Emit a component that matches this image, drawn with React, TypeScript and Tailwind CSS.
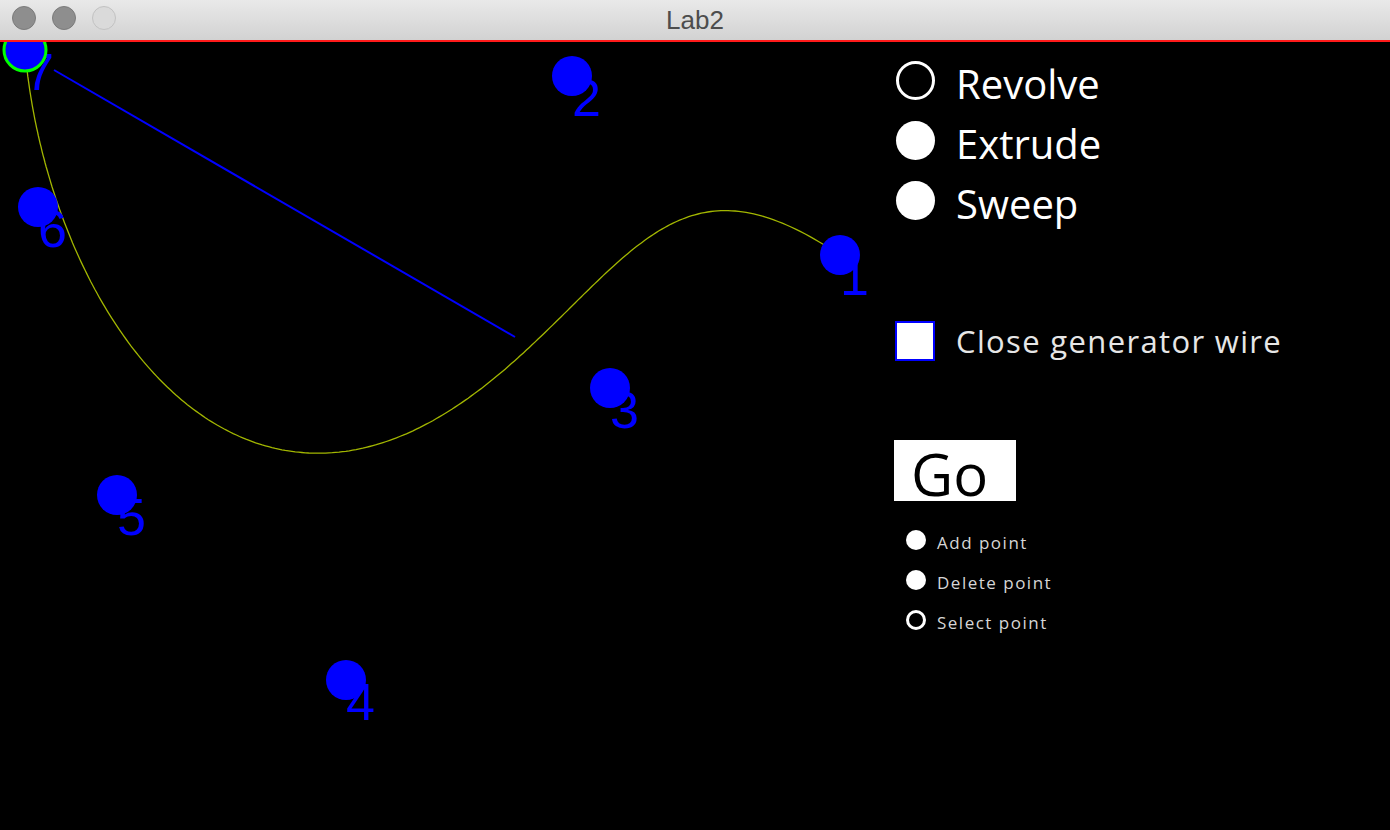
import { FC } from 'react';

// control points of the generator wire, in canvas coordinates
const points: [number, number][] = [
  [840, 213],
  [572, 34],
  [610, 346],
  [346, 638],
  [117, 453],
  [38, 165],
  [25, 8],
];

// de Casteljau evaluation of the bezier through all the points
const bezier = (pts: [number, number][], t: number): [number, number] => {
  let p = pts.map((q) => [q[0], q[1]] as [number, number]);
  while (p.length > 1) {
    const next: [number, number][] = [];
    for (let i = 0; i < p.length - 1; i++) {
      next.push([p[i][0] + (p[i + 1][0] - p[i][0]) * t, p[i][1] + (p[i + 1][1] - p[i][1]) * t]);
    }
    p = next;
  }
  return p[0];
};

const curve = Array.from({ length: 301 }, (_, i) => bezier(points, i / 300))
  .map(([x, y]) => `${x.toFixed(1)},${y.toFixed(1)}`)
  .join(' ');

const TitleBar: FC = () => (
  <div className="relative h-[40px] bg-gradient-to-b from-[#e9e9e9] to-[#d2d2d2] flex items-center justify-center">
    <div className="absolute left-[12px] top-[6px] flex gap-[16px]">
      <div className="w-[24px] h-[24px] rounded-full bg-[#8e8e8e] border border-[#7b7b7b]" />
      <div className="w-[24px] h-[24px] rounded-full bg-[#8e8e8e] border border-[#7b7b7b]" />
      <div className="w-[24px] h-[24px] rounded-full bg-[#dadada] border border-[#c2c2c2]" />
    </div>
    <span className="text-[26px] leading-none text-[#4d4d4d]" style={{ fontFamily: '"Liberation Sans", Arial, sans-serif' }}>
      Lab2
    </span>
  </div>
);

const Canvas: FC = () => (
  <svg width={880} height={788} viewBox="0 0 880 788" className="block shrink-0">
    <polyline points={curve} fill="none" stroke="#a2b600" strokeWidth={1.3} />
    <line x1={54} y1={28} x2={515} y2={295} stroke="#0000ff" strokeWidth={2} />
    {points.map(([x, y], i) => (
      <text
        key={`t${i}`}
        x={x}
        y={y + 40}
        fill="#0000ff"
        fontSize={52}
        style={{ fontFamily: '"Liberation Sans", Arial, sans-serif' }}
      >
        {i + 1}
      </text>
    ))}
    {points.map(([x, y], i) => (
      <circle key={`c${i}`} cx={x} cy={y} r={20} fill="#0000ff" />
    ))}
    <circle cx={25} cy={8} r={21} fill="none" stroke="#00ff00" strokeWidth={3} />
  </svg>
);

const modes = [
  { label: 'Revolve', on: false },
  { label: 'Extrude', on: true },
  { label: 'Sweep', on: true },
];

const tools = [
  { label: 'Add point', on: true },
  { label: 'Delete point', on: true },
  { label: 'Select point', on: false },
];

const Panel: FC = () => (
  <div className="flex flex-col pl-[15px] pt-[18px]" style={{ fontFamily: '"Open Sans", sans-serif' }}>
    <div className="flex flex-col gap-[20px]">
      {modes.map((m) => (
        <div key={m.label} className="flex items-start h-[40px]">
          <div
            className={`ml-px mt-px w-[39px] h-[39px] rounded-full ${m.on ? 'bg-white' : 'border-[3px] border-white'}`}
          />
          <span className="ml-[21px] mt-[4px] text-[40px] leading-none text-white">{m.label}</span>
        </div>
      ))}
    </div>

    <div className="flex items-start h-[40px] mt-[101px]">
      <div className="w-[40px] h-[40px] bg-white border-2 border-[#0000ff]" />
      <span className="ml-[21px] mt-[5px] text-[31px] leading-none tracking-[1.35px] text-[#e6e6e6]">
        Close generator wire
      </span>
    </div>

    <div className="-ml-px mt-[79px] w-[122px] h-[61px] bg-white pl-[17px] pt-[5px]">
      <span className="text-[58px] leading-none text-black">Go</span>
    </div>

    <div className="flex flex-col gap-[20px] mt-[29px]">
      {tools.map((t) => (
        <div key={t.label} className="flex items-start h-[20px]">
          <div
            className={`ml-[11px] w-[20px] h-[20px] rounded-full ${t.on ? 'bg-white' : 'border-[3px] border-white'}`}
          />
          <span className="ml-[11px] mt-[4px] text-[17px] leading-none tracking-[1.5px] text-[#d6d6d6]">
            {t.label}
          </span>
        </div>
      ))}
    </div>
  </div>
);

const App: FC = () => (
  <div className="w-[1390px] h-[830px] bg-black overflow-hidden">
    <TitleBar />
    <div className="h-[2px] bg-[#ff1a1a]" />
    <div className="flex h-[788px]">
      <Canvas />
      <Panel />
    </div>
  </div>
);

export default App;
